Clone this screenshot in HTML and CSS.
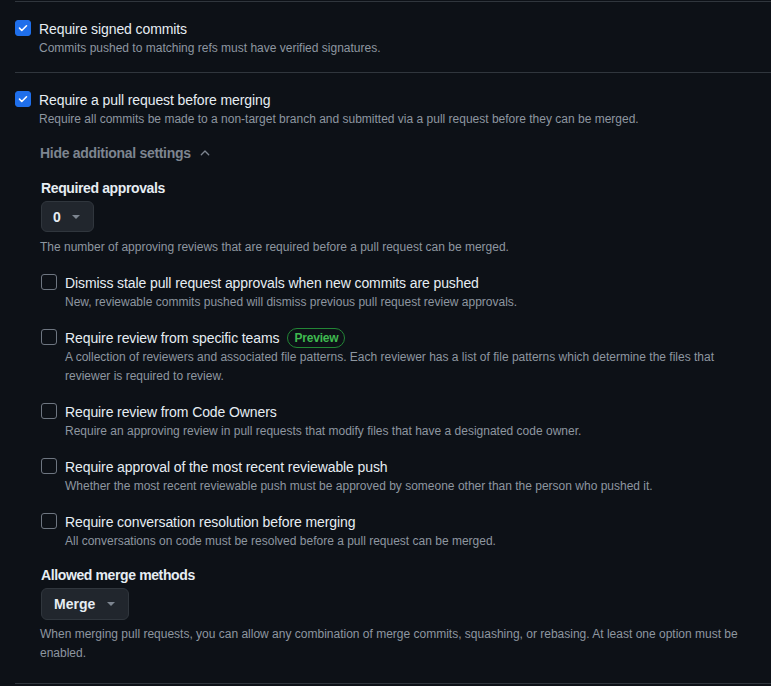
FILE: index.html
```html
<!DOCTYPE html>
<html lang="en">
<head>
<meta charset="utf-8">
<title>Branch protection</title>
<link rel="stylesheet" href="styles.css">
</head>
<body>
<div class="page">
  <section class="rule">
    <div class="option">
      <span class="cb checked"><svg viewBox="0 0 16 16" width="16" height="16"><path d="M4 8.2l2.6 2.6L12 5.4" fill="none" stroke="#fff" stroke-width="1.8" stroke-linecap="round" stroke-linejoin="round"/></svg></span>
      <div class="option-body">
        <div class="title">Require signed commits</div>
        <div class="desc">Commits pushed to matching refs must have verified signatures.</div>
      </div>
    </div>
  </section>

  <section class="rule rule-last">
    <div class="option">
      <span class="cb checked"><svg viewBox="0 0 16 16" width="16" height="16"><path d="M4 8.2l2.6 2.6L12 5.4" fill="none" stroke="#fff" stroke-width="1.8" stroke-linecap="round" stroke-linejoin="round"/></svg></span>
      <div class="option-body">
        <div class="title">Require a pull request before merging</div>
        <div class="desc">Require all commits be made to a non-target branch and submitted via a pull request before they can be merged.</div>
      </div>
    </div>

    <div class="settings">
      <button class="toggle">Hide additional settings <svg viewBox="0 0 16 16" width="14" height="14"><path fill="currentColor" d="M3.22 10.53a.749.749 0 0 1 0-1.06l4.25-4.25a.749.749 0 0 1 1.06 0l4.25 4.25a.749.749 0 0 1-1.06 1.06L8 6.811 4.28 10.53a.749.749 0 0 1-1.06 0Z"/></svg></button>

      <div class="field">
        <div class="label">Required approvals</div>
        <button class="select select-num">0 <span class="caret"></span></button>
        <div class="desc">The number of approving reviews that are required before a pull request can be merged.</div>
      </div>

      <div class="sub">
        <span class="cb"></span>
        <div class="option-body">
          <div class="title">Dismiss stale pull request approvals when new commits are pushed</div>
          <div class="desc">New, reviewable commits pushed will dismiss previous pull request review approvals.</div>
        </div>
      </div>

      <div class="sub">
        <span class="cb"></span>
        <div class="option-body">
          <div class="title">Require review from specific teams <span class="badge">Preview</span></div>
          <div class="desc">A collection of reviewers and associated file patterns. Each reviewer has a list of file patterns which determine the files that reviewer is required to review.</div>
        </div>
      </div>

      <div class="sub">
        <span class="cb"></span>
        <div class="option-body">
          <div class="title">Require review from Code Owners</div>
          <div class="desc">Require an approving review in pull requests that modify files that have a designated code owner.</div>
        </div>
      </div>

      <div class="sub">
        <span class="cb"></span>
        <div class="option-body">
          <div class="title">Require approval of the most recent reviewable push</div>
          <div class="desc">Whether the most recent reviewable push must be approved by someone other than the person who pushed it.</div>
        </div>
      </div>

      <div class="sub">
        <span class="cb"></span>
        <div class="option-body">
          <div class="title">Require conversation resolution before merging</div>
          <div class="desc">All conversations on code must be resolved before a pull request can be merged.</div>
        </div>
      </div>

      <div class="field field-merge">
        <div class="label">Allowed merge methods</div>
        <button class="select select-merge">Merge <span class="caret"></span></button>
        <div class="desc">When merging pull requests, you can allow any combination of merge commits, squashing, or rebasing. At least one option must be enabled.</div>
      </div>
    </div>
  </section>
</div>
</body>
</html>
```

FILE: styles.css
```css
* { box-sizing: border-box; }
html, body {
  margin: 0;
  background: #0d1117;
  color: #e6edf3;
  font-family: "Liberation Sans", Arial, sans-serif;
}
.page {
  padding-left: 15px;
  padding-top: 1px;
}
.rule {
  border-top: 1px solid #30363d;
  padding: 17px 16px 14px 0;
}
.rule-last {
  border-bottom: 1px solid #30363d;
  padding-bottom: 20px;
}
.option, .sub {
  display: flex;
  align-items: flex-start;
  gap: 8px;
}
.cb {
  flex: none;
  width: 16px;
  height: 16px;
  margin-top: 1px;
  border: 1px solid #6e7681;
  border-radius: 3px;
  display: flex;
  align-items: center;
  justify-content: center;
}
.cb.checked {
  background: #1f6feb;
  border-color: #1f6feb;
}
.cb svg { display: block; }
.title {
  font-size: 14px;
  line-height: 20px;
  letter-spacing: -0.1px;
  display: flex;
  align-items: center;
  gap: 8px;
}
.desc {
  font-size: 12px;
  line-height: 19px;
  color: #8d96a0;
}
.settings {
  padding-left: 25px;
  display: flex;
  flex-direction: column;
}
.toggle {
  align-self: flex-start;
  background: none;
  border: 0;
  padding: 0;
  margin-top: 14px;
  font-family: inherit;
  font-size: 14px;
  line-height: 20px;
  font-weight: 700;
  letter-spacing: -0.3px;
  color: #7d8590;
  display: flex;
  align-items: center;
  gap: 7px;
}
.toggle svg { display: block; }
.field { margin-top: 15px; display: flex; flex-direction: column; }
.label {
  font-size: 14px;
  line-height: 20px;
  font-weight: 700;
  letter-spacing: -0.38px;
  margin-left: 1px;
  margin-bottom: 3px;
}
.select {
  align-self: flex-start;
  margin-left: 1px;
  background: #21262d;
  border: 1px solid #30363d;
  border-radius: 6px;
  color: #e6edf3;
  font-family: inherit;
  font-size: 14px;
  font-weight: 700;
  display: flex;
  align-items: center;
  gap: 12px;
  padding: 0 13px 0 12px;
}
.select-num { height: 31px; gap: 11px; padding-left: 11px; }
.select-merge { height: 32px; }
.caret {
  width: 0;
  height: 0;
  border-left: 4px solid transparent;
  border-right: 4px solid transparent;
  border-top: 4px solid #7d8590;
}
.field .desc { margin-top: 6px; }
.field-merge .desc { margin-top: 5px; }
.sub { margin-top: 16px; padding-left: 1px; }
.field-merge { margin-top: 14px; }
.badge {
  font-size: 12px;
  line-height: 18px;
  font-weight: 700;
  letter-spacing: -0.2px;
  color: #3fb950;
  border: 1px solid #238636;
  border-radius: 999px;
  padding: 0 6px;
}
```
